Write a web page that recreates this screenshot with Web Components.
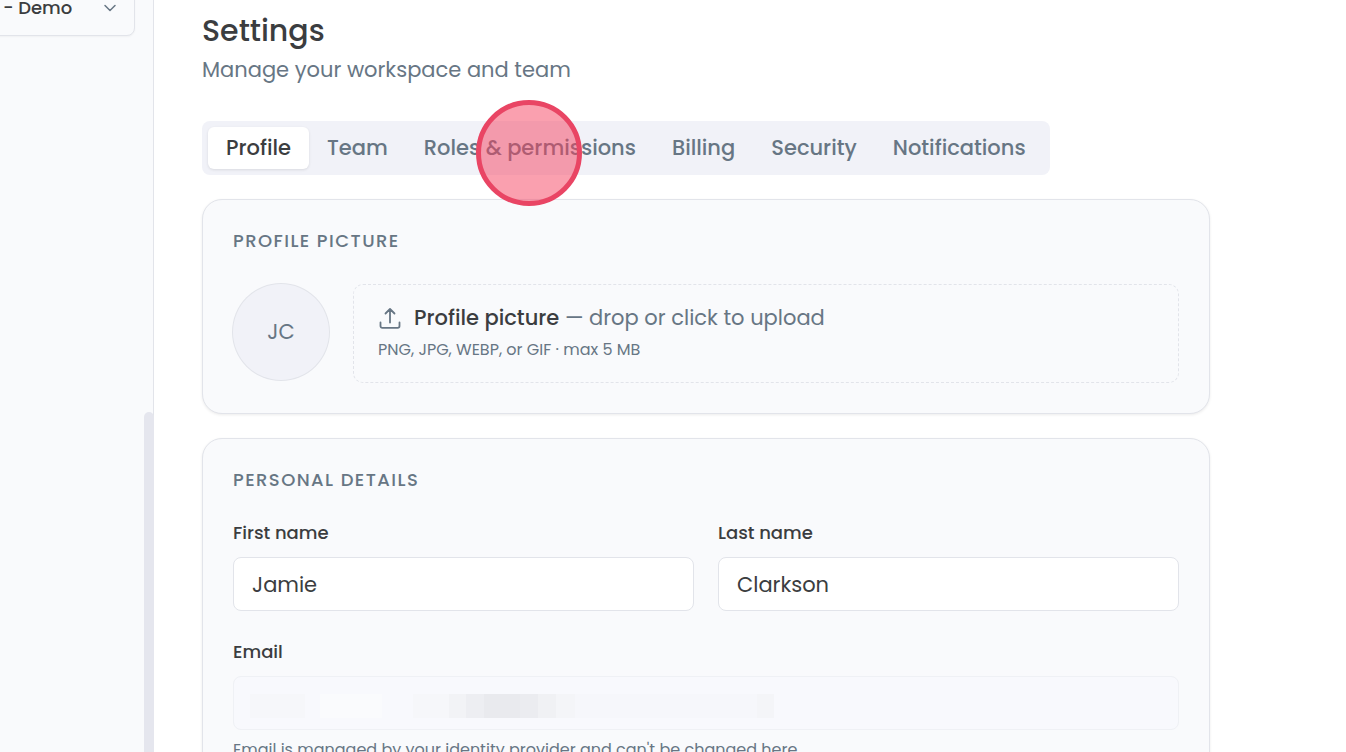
<!DOCTYPE html>
<html lang="en">
<head>
<meta charset="utf-8">
<title>Settings</title>
<style>
  :root {
    --ink: #3b3d40;
    --muted: #677684;
    --line: #e2e4ea;
    --surface: #f9fafc;
    --wash: #f1f2f8;
  }
  body { margin: 0; background: #fff; color: var(--ink); font: 400 21px/32px Poppins, Inter, sans-serif; }
</style>
</head>
<body>
<app-shell>
  <workspace-picker slot="side"></workspace-picker>
  <page-heading>
    <span slot="title">Settings</span>
    Manage your workspace and team
  </page-heading>
  <tab-bar></tab-bar>
  <settings-card heading="Profile picture">
    <picture-upload initials="JC"></picture-upload>
  </settings-card>
  <settings-card heading="Personal details">
    <field-grid>
      <text-field label="First name" value="Jamie"></text-field>
      <text-field label="Last name" value="Clarkson"></text-field>
      <text-field label="Email" value="" locked>Email is managed by your identity provider and can't be changed here.</text-field>
    </field-grid>
  </settings-card>
</app-shell>
<script>
const define = (name, html, setup) => customElements.define(name, class extends HTMLElement {
  constructor() {
    super();
    const t = document.createElement('template');
    t.innerHTML = html;
    this.attachShadow({ mode: 'open' }).append(t.content.cloneNode(true));
  }
  connectedCallback() { if (setup) setup(this, this.shadowRoot); }
});

define('app-shell', `
<style>
  :host { display: grid; grid-template-columns: 154px 1fr; height: 100vh; overflow: hidden; }
  aside { box-sizing: border-box; display: grid; grid-template-columns: 1fr 10px; background: var(--surface); box-shadow: inset -1px 0 var(--line); overflow: hidden; }
  .thumb { margin-top: 412px; border-radius: 5px 5px 0 0; background: #e5e6ee; }
  main { display: flex; flex-direction: column; gap: 24px; max-width: 1008px; padding: 9px 48px 0; }
</style>
<aside><div><slot name="side"></slot></div><div class="thumb"></div></aside>
<main><slot></slot></main>`);

define('workspace-picker', `
<style>
  :host { display: grid; margin: -20px 9px 0 -10px; align-items: center; }
  select, svg { grid-area: 1 / 1; }
  select { appearance: none; height: 56px; padding: 0 40px 0 12px; border: 1px solid var(--line); border-radius: 8px; background: var(--surface); color: var(--ink); font: inherit; font-size: 18px; font-weight: 500; box-shadow: 0 1px 2px #0000000a; }
  svg { justify-self: end; margin-right: 18px; pointer-events: none; }
</style>
<select aria-label="Workspace"><option>- Demo</option></select>
<svg width="14" height="14" viewBox="0 0 14 14" fill="none" stroke="#677684" stroke-width="1.5" stroke-linecap="round" stroke-linejoin="round"><path d="M2 4.500l5 5 5-5"/></svg>`);

define('page-heading', `
<style>
  :host { display: block; margin-bottom: 10px; color: var(--muted); }
  h1 { margin: 0; color: var(--ink); font-size: 30px; line-height: 44px; font-weight: 500; }
  p { margin: 0; line-height: 34px; }
</style>
<h1><slot name="title"></slot></h1><p><slot></slot></p>`);

define('tab-bar', `
<style>
  :host { display: flex; position: relative; align-self: flex-start; padding: 6px; border-radius: 8px; background: var(--wash); }
  button { height: 42px; padding: 0 18px; border: 0; border-radius: 6px; background: none; color: var(--muted); font: inherit; font-weight: 500; }
  button[aria-selected=true] { background: #fff; color: var(--ink); box-shadow: 0 1px 3px #0000001a; }
  .tap { position: absolute; left: 274px; top: -21px; width: 96px; height: 96px; border: 5px solid #e94564; border-radius: 50%; background: #f5415f80; pointer-events: none; }
</style>
<button role="tab" aria-selected="true">Profile</button>
<button role="tab">Team</button>
<button role="tab">Roles &amp; permissions</button>
<button role="tab">Billing</button>
<button role="tab">Security</button>
<button role="tab">Notifications</button>
<span class="tap"></span>`);

define('settings-card', `
<style>
  :host { display: block; padding: 27px 30px 30px; border: 1px solid var(--line); border-radius: 20px; background: var(--surface); box-shadow: 0 1px 3px #00000014; }
  h2 { margin: 0 0 25px; color: var(--muted); font-size: 18px; line-height: 28px; font-weight: 500; letter-spacing: 0.08em; text-transform: uppercase; }
</style>
<h2></h2><slot></slot>`, (el, root) => { root.querySelector('h2').textContent = el.getAttribute('heading'); });

define('picture-upload', `
<style>
  :host { display: flex; gap: 24px; align-items: flex-start; padding-top: 4px; }
  .avatar { flex: none; width: 96px; height: 96px; display: grid; place-items: center; border-radius: 50%; box-shadow: 0 0 0 1px var(--line); background: var(--wash); color: var(--muted); }
  button { flex: 1; height: 99px; padding: 0 24px; border: 1px dashed var(--line); border-radius: 10px; background: none; color: var(--muted); font: inherit; text-align: left; }
  .line { display: flex; align-items: center; gap: 12px; }
  b { color: var(--ink); font-weight: 500; }
  small { display: block; font-size: 16px; }
</style>
<span class="avatar"></span>
<button type="button">
  <span class="line">
    <svg width="24" height="24" viewBox="0 0 24 24" fill="none" stroke="currentColor" stroke-width="1.800" stroke-linecap="round" stroke-linejoin="round"><path d="M12 16.500V3.500M7.500 7.500l4.500-4.500 4.500 4.500M2.500 16.500v3.500a1.800 1.800 0 0 0 1.800 1.800h15.400a1.800 1.800 0 0 0 1.800-1.800v-3.500"/></svg>
    <span><b>Profile picture</b> — drop or click to upload</span>
  </span>
  <small>PNG, JPG, WEBP, or GIF · max 5 MB</small>
</button>`, (el, root) => { root.querySelector('.avatar').textContent = el.getAttribute('initials'); });

define('field-grid', `
<style>
  :host { display: grid; grid-template-columns: 1fr 1fr; gap: 27px 24px; }
  ::slotted([locked]) { grid-column: 1 / -1; }
</style>
<slot></slot>`);

define('text-field', `
<style>
  :host { display: block; }
  label { display: block; margin-bottom: 10px; font-size: 18px; line-height: 28px; font-weight: 500; }
  input { box-sizing: border-box; display: block; width: 100%; height: 54px; padding: 0 18px; border: 1px solid var(--line); border-radius: 8px; background: #fff; color: var(--ink); font: inherit; }
  /* the locked value is masked by a row of pale blocks */
  input:disabled {
    border-color: #eff1f5;
    background: linear-gradient(90deg, #f6f7fa 0 55px, #f8f9fd 0 70px, #fafbfd 0 132px, #f8f9fd 0 163px, #f6f7fa 0 199px, #f2f3f6 0 216px, #edeef2 0 234px, #e9eaee 0 270px, #ebecf0 0 288px, #f0f1f4 0 306px, #f4f5f8 0 325px, #f6f7fb 0 507px, #f4f5f8 0) 16px 17px / 524px 24px no-repeat #f8f9fd;
  }
  p { margin: 6px 0 0; color: var(--muted); font-size: 16px; line-height: 28px; }
</style>
<label for="box"></label><input id="box">`, (el, root) => {
  root.querySelector('label').textContent = el.getAttribute('label');
  root.querySelector('input').value = el.getAttribute('value');
  if (el.hasAttribute('locked')) {
    root.querySelector('input').disabled = true;
    const p = document.createElement('p');
    p.append(document.createElement('slot'));
    root.append(p);
  }
});
</script>
</body>
</html>
